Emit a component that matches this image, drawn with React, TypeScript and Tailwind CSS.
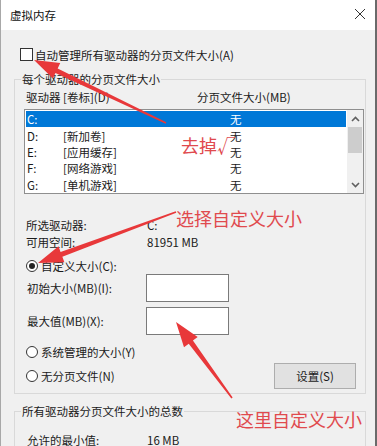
import React from "react";

const drives = [
  { d: "C:", label: "", size: "无" },
  { d: "D:", label: "[新加卷]", size: "无" },
  { d: "E:", label: "[应用缓存]", size: "无" },
  { d: "F:", label: "[网络游戏]", size: "无" },
  { d: "G:", label: "[单机游戏]", size: "无" },
];

// annotation arrow: tapered shaft + filled head
const arrowPoints = (tx: number, ty: number, hx: number, hy: number) => {
  const len = Math.hypot(hx - tx, hy - ty);
  const ux = (hx - tx) / len;
  const uy = (hy - ty) / len;
  const nx = -uy;
  const ny = ux;
  const headLen = 25;
  const headW = 8.5;
  const bx = hx - ux * headLen;
  const by = hy - uy * headLen;
  const pts = [
    [tx + nx * 0.8, ty + ny * 0.8],
    [bx + nx * 2.6, by + ny * 2.6],
    [bx + nx * headW, by + ny * headW],
    [hx, hy],
    [bx - nx * headW, by - ny * headW],
    [bx - nx * 2.6, by - ny * 2.6],
    [tx - nx * 0.8, ty - ny * 0.8],
  ];
  return pts.map((p) => p.join(",")).join(" ");
};

const Radio = ({ checked, label }: { checked?: boolean; label: string }) => (
  <div className="flex items-center h-[14px] gap-[3px]">
    <span className="w-[12px] h-[12px] rounded-full border border-[#333] bg-white flex items-center justify-center">
      {checked && <span className="w-[6px] h-[6px] rounded-full bg-[#222]" />}
    </span>
    <span>{label}</span>
  </div>
);

export default function App() {
  return (
    <div
      className="relative w-[377px] h-[446px] overflow-hidden bg-[#f0f0f0] border-l border-[#a8a8a8] border-r-2 border-r-[#6a6a6a] text-[11.5px] leading-[14px] text-[#1a1a1a]"
      style={{ fontFamily: '"Noto Sans CJK SC", "Noto Sans", sans-serif' }}
    >
      {/* title bar */}
      <div className="h-[30px] bg-white flex items-center justify-between pl-[9px] pr-[9px]">
        <span className="text-[#111]">虚拟内存</span>
        <svg width="12" height="12" viewBox="0 0 12 12" className="mt-[-3px]">
          <path d="M1 1L11 11M11 1L1 11" stroke="#333" strokeWidth="1" />
        </svg>
      </div>

      {/* auto manage */}
      <div className="mt-[18px] pl-[19px] flex items-center h-[13px] gap-[2px]">
        <span className="w-[13px] h-[13px] border border-[#333] bg-white" />
        <span>自动管理所有驱动器的分页文件大小(A)</span>
      </div>

      {/* per drive group */}
      <fieldset className="mt-[11px] ml-[13px] w-[352px] border border-[#d9d9d9] pb-[4px]">
        <legend className="ml-[6px] px-[1px] leading-[14px]">每个驱动器的分页文件大小</legend>

        <div className="mt-[4px] pl-[11px] flex h-[14px]">
          <span className="w-[171px]">驱动器 [卷标](D)</span>
          <span>分页文件大小(MB)</span>
        </div>

        <div className="mt-[5px] ml-[9px] w-[340px] h-[85px] border border-[#8f8f8f] bg-white flex">
          <div className="flex-1 pt-[1px] pl-[1px] pr-[1px]">
            {drives.map((r, i) => (
              <div
                key={r.d}
                className={
                  "h-[16.4px] flex items-center pl-[1px] " +
                  (i === 0 ? "bg-[#0078d7] text-white" : "")
                }
              >
                <span className="w-[36px]">{r.d}</span>
                <span className="w-[167px]">{r.label}</span>
                <span>{r.size}</span>
              </div>
            ))}
          </div>
          <div className="w-[16px] bg-[#f0f0f0] flex flex-col items-center">
            <div className="h-[17px] flex items-center justify-center">
              <svg width="9" height="6" viewBox="0 0 9 6">
                <path d="M1 5L4.5 1.5L8 5" stroke="#606060" strokeWidth="1.6" fill="none" />
              </svg>
            </div>
            <div className="flex-1 w-full px-[1px]">
              <div className="h-[26px] bg-[#cdcdcd]" />
            </div>
            <div className="h-[17px] flex items-center justify-center">
              <svg width="9" height="6" viewBox="0 0 9 6">
                <path d="M1 1L4.5 4.5L8 1" stroke="#606060" strokeWidth="1.6" fill="none" />
              </svg>
            </div>
          </div>
        </div>

        <div className="mt-[22px] pl-[11px]">
          <div className="flex h-[17px] items-center">
            <span className="w-[121px]">所选驱动器:</span>
            <span>C:</span>
          </div>
          <div className="flex h-[17px] items-center">
            <span className="w-[121px]">可用空间:</span>
            <span>81951 MB</span>
          </div>
        </div>

        <div className="mt-[9px] pl-[11px]">
          <Radio checked label="自定义大小(C):" />
        </div>

        <div className="mt-[1px] pl-[12px] flex items-center h-[28px]">
          <span className="w-[119px]">初始大小(MB)(I):</span>
          <div className="w-[83px] h-[28px] border border-[#7a7a7a] bg-white" />
        </div>
        <div className="mt-[5px] pl-[12px] flex items-center h-[28px]">
          <span className="w-[119px]">最大值(MB)(X):</span>
          <div className="w-[83px] h-[28px] border border-[#7a7a7a] bg-white" />
        </div>

        <div className="mt-[10px] pl-[11px] pr-[9px] flex justify-between items-start">
          <div className="flex flex-col gap-[10px]">
            <Radio label="系统管理的大小(Y)" />
            <Radio label="无分页文件(N)" />
          </div>
          <button className="mt-[18px] w-[82px] h-[26px] bg-[#e1e1e1] border border-[#adadad] text-[#1a1a1a]">
            设置(S)
          </button>
        </div>
      </fieldset>

      {/* totals group */}
      <fieldset className="mt-[10px] ml-[13px] w-[352px] border border-[#d9d9d9] pb-[10px]">
        <legend className="ml-[6px] px-[1px] leading-[14px]">所有驱动器分页文件大小的总数</legend>
        <div className="mt-[15px] pl-[12px]">
          <div className="flex h-[14px] items-center">
            <span className="w-[120px]">允许的最小值:</span>
            <span>16 MB</span>
          </div>
          <div className="flex h-[17px] items-center mt-[4px]">
            <span className="w-[120px]">推荐:</span>
            <span>1910 MB</span>
          </div>
          <div className="flex h-[17px] items-center">
            <span className="w-[120px]">当前已分配:</span>
            <span>0 MB</span>
          </div>
        </div>
      </fieldset>

      {/* red annotations */}
      <svg className="absolute inset-0 pointer-events-none" width="377" height="446">
        <polygon points={arrowPoints(165, 123, 33, 60)} fill="#e8383a" />
        <polygon points={arrowPoints(175, 212, 37, 263)} fill="#e8383a" />
        <polygon points={arrowPoints(231, 398, 175, 322)} fill="#e8383a" />
      </svg>
      <div className="absolute left-[180px] top-[134px] text-[18px] leading-[22px] text-[#e04a4e]">去掉√</div>
      <div className="absolute left-[175px] top-[207px] text-[18px] leading-[22px] text-[#e04a4e]">选择自定义大小</div>
      <div className="absolute left-[235px] top-[408px] text-[18px] leading-[22px] text-[#e04a4e]">这里自定义大小</div>
    </div>
  );
}
